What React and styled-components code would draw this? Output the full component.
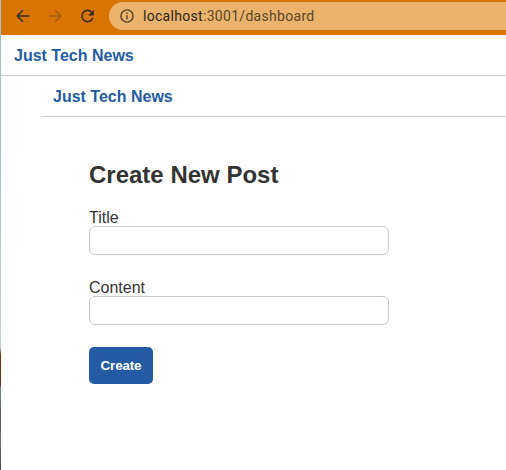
import React from "react";
import styled, { createGlobalStyle } from "styled-components";

const GlobalStyle = createGlobalStyle`
  * { box-sizing: border-box; }
  body { margin: 0; background: #fff; overflow: hidden; }
`;

const Screen = styled.div`
  display: flex;
  width: 506px;
  height: 470px;
  font-family: "Liberation Sans", Arial, sans-serif;
  color: #333;
`;

const DesktopEdge = styled.div`
  flex: 0 0 1px;
  background: linear-gradient(
    #9fc2cd 0, #9fc2cd 150px, #b9cfcd 300px, #c3d6d2 348px,
    #8b9490 349px, #8b8d88 352px, #7a2f10 353px, #74300f 375px,
    #5d342a 385px, #76828a 388px, #555c63 420px, #6b7278 440px, #4f443f 470px
  );
`;

const Window = styled.div`
  flex: 1;
  min-width: 0;
  display: flex;
  flex-direction: column;
`;

const Toolbar = styled.div`
  display: flex;
  flex: 0 0 35px;
  align-items: flex-start;
  background: #d87500;
`;

const NavIcon = styled.svg`
  display: block;
  flex: none;
  width: 16px;
  height: 16px;
  margin: 8px 0 0 ${(p) => p.$gap}px;
  fill: none;
  stroke: ${(p) => (p.$muted ? "#a65f12" : "#362c20")};
  stroke-width: 1.6;
`;

const AddressBar = styled.div`
  display: flex;
  flex: 1;
  align-items: center;
  height: 28px;
  margin: 2px 0 0 13px;
  padding-left: 11px;
  border-radius: 14px 0 0 14px;
  background: #ebb36b;
`;

const InfoIcon = styled.svg`
  flex: none;
  width: 14px;
  height: 14px;
  margin-right: 9px;
  fill: none;
  stroke: #51402b;
  stroke-width: 1.4;
`;

const Url = styled.span`
  font: 14px/20px Roboto, sans-serif;
  letter-spacing: 0.3px;
  color: #5b462c;
  white-space: nowrap;
`;

const Host = styled.span`
  color: #2b251d;
`;

const Header = styled.header`
  height: 41px;
  padding: 12px 0 0 ${(p) => (p.$nested ? 12 : 13)}px;
  border-bottom: 1px solid #c9c9cb;
`;

const Brand = styled.div`
  font-size: 16px;
  font-weight: 700;
  line-height: 18px;
  color: #235ca3;
`;

const Page = styled.main`
  margin-left: 40px;
`;

const PostForm = styled.form`
  display: flex;
  flex-direction: column;
  align-items: flex-start;
  padding: 43px 0 0 48px;
`;

const Title = styled.h1`
  margin: 0 0 20px;
  font-size: 24px;
  line-height: 29px;
  font-weight: 700;
`;

const Label = styled.label`
  display: flex;
  flex-direction: column;
  height: ${(p) => (p.$last ? 68 : 70)}px;
  font-size: 16px;
  line-height: 18px;
`;

const Input = styled.input`
  width: 300px;
  height: 29px;
  margin: -1px 0 0;
  padding: 4px 8px;
  border: 1px solid #c9c9cb;
  border-radius: 6px;
  outline: none;
  background: #fff;
`;

const CreateButton = styled.button`
  width: 64px;
  height: 37px;
  padding: 0;
  border: 0;
  border-radius: 5px;
  background: #235ca3;
  color: #fff;
  font: 700 13.33px/18px "Liberation Sans", Arial, sans-serif;
  letter-spacing: -0.1px;
`;

export default function App() {
  return (
    <Screen>
      <GlobalStyle />
      <DesktopEdge />
      <Window>
        <Toolbar>
          <NavIcon $gap={14} viewBox="0 0 16 16">
            <path d="M14.3 8H2.5M8 2.2 2.2 8 8 13.8" />
          </NavIcon>
          <NavIcon $gap={16} $muted viewBox="0 0 16 16">
            <path d="M1.7 8h11.8M8 2.2 13.8 8 8 13.8" />
          </NavIcon>
          <NavIcon $gap={17} viewBox="0 0 16 16">
            <path d="M12.8 10A5.6 5.6 0 1 1 11.6 4.1L12.7 5.2" />
            <path d="M13.8 1.8v5.6H8.2L10.6 5h1.7V3.2z" fill="#362c20" stroke="none" />
          </NavIcon>
          <AddressBar>
            <InfoIcon viewBox="0 0 14 14">
              <circle cx="7" cy="7" r="6.1" />
              <path d="M7 6.2v4.1M7 3.6v1.4" />
            </InfoIcon>
            <Url><Host>localhost</Host>:3001/dashboard</Url>
          </AddressBar>
        </Toolbar>
        <Header><Brand>Just Tech News</Brand></Header>
        <Page>
          <Header $nested><Brand>Just Tech News</Brand></Header>
          <PostForm>
            <Title>Create New Post</Title>
            <Label>Title<Input /></Label>
            <Label $last>Content<Input /></Label>
            <CreateButton type="button">Create</CreateButton>
          </PostForm>
        </Page>
      </Window>
    </Screen>
  );
}
